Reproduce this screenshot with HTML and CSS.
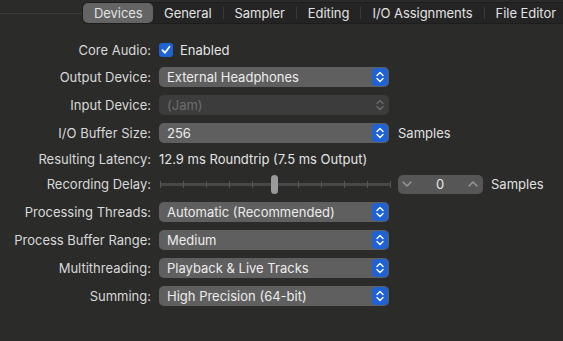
FILE: index.html
```html
<!DOCTYPE html>
<html lang="en">
<head>
    <meta charset="UTF-8">
    <meta name="viewport" content="width=device-width, initial-scale=1.0">
    <title>Audio Settings</title>
    <link rel="stylesheet" href="styles.css">
</head>
<body>
    <div class="toolbar">
        <div class="toolbar-line"></div>
        <div class="tabs">
            <div class="tab selected">Devices</div>
            <div class="tab">General</div>
            <div class="sep"></div>
            <div class="tab">Sampler</div>
            <div class="sep"></div>
            <div class="tab">Editing</div>
            <div class="sep"></div>
            <div class="tab">I/O Assignments</div>
            <div class="sep"></div>
            <div class="tab">File Editor</div>
            <div class="sep"></div>
        </div>
    </div>

    <div class="form">
        <div class="row core-row">
            <div class="label">Core Audio:</div>
            <span class="checkbox">
                <svg width="14" height="14" viewBox="0 0 14 14"><polyline points="3.5,7.2 6,9.8 10.5,3.8" fill="none" stroke="#fff" stroke-width="1.8" stroke-linecap="round" stroke-linejoin="round"/></svg>
            </span>
            <span class="value">Enabled</span>
        </div>

        <div class="row">
            <div class="label">Output Device:</div>
            <div class="popup">
                <span>External Headphones</span>
                <span class="arrows">
                    <svg width="16" height="18" viewBox="0 0 16 18"><polyline points="5,7.5 8,4.5 11,7.5" fill="none" stroke="#fff" stroke-width="1.4" stroke-linecap="round" stroke-linejoin="round"/><polyline points="5,10.5 8,13.5 11,10.5" fill="none" stroke="#fff" stroke-width="1.4" stroke-linecap="round" stroke-linejoin="round"/></svg>
                </span>
            </div>
        </div>

        <div class="row">
            <div class="label">Input Device:</div>
            <div class="popup disabled">
                <span>(Jam)</span>
                <span class="arrows">
                    <svg width="16" height="18" viewBox="0 0 16 18"><polyline points="5,7.5 8,4.5 11,7.5" fill="none" stroke="#6c6c6c" stroke-width="1.4" stroke-linecap="round" stroke-linejoin="round"/><polyline points="5,10.5 8,13.5 11,10.5" fill="none" stroke="#6c6c6c" stroke-width="1.4" stroke-linecap="round" stroke-linejoin="round"/></svg>
                </span>
            </div>
        </div>

        <div class="row">
            <div class="label">I/O Buffer Size:</div>
            <div class="popup">
                <span>256</span>
                <span class="arrows">
                    <svg width="16" height="18" viewBox="0 0 16 18"><polyline points="5,7.5 8,4.5 11,7.5" fill="none" stroke="#fff" stroke-width="1.4" stroke-linecap="round" stroke-linejoin="round"/><polyline points="5,10.5 8,13.5 11,10.5" fill="none" stroke="#fff" stroke-width="1.4" stroke-linecap="round" stroke-linejoin="round"/></svg>
                </span>
            </div>
            <span class="unit">Samples</span>
        </div>

        <div class="row latency-row">
            <div class="label">Resulting Latency:</div>
            <span class="value">12.9 ms Roundtrip (7.5 ms Output)</span>
        </div>

        <div class="row delay-row">
            <div class="label">Recording Delay:</div>
            <div class="slider">
                <div class="track"></div>
                <div class="ticks">
                    <i></i><i></i><i></i><i></i><i></i><i></i><i></i><i></i><i></i><i></i><i></i>
                </div>
                <div class="knob"></div>
            </div>
            <div class="stepper">
                <svg width="12" height="8" viewBox="0 0 12 8"><polyline points="2,2 6,6 10,2" fill="none" stroke="#9c9c9c" stroke-width="1.3" stroke-linecap="round" stroke-linejoin="round"/></svg>
                <span class="step-value">0</span>
                <svg width="12" height="8" viewBox="0 0 12 8"><polyline points="2,6 6,2 10,6" fill="none" stroke="#9c9c9c" stroke-width="1.3" stroke-linecap="round" stroke-linejoin="round"/></svg>
            </div>
            <span class="unit">Samples</span>
        </div>

        <div class="row">
            <div class="label">Processing Threads:</div>
            <div class="popup">
                <span>Automatic (Recommended)</span>
                <span class="arrows">
                    <svg width="16" height="18" viewBox="0 0 16 18"><polyline points="5,7.5 8,4.5 11,7.5" fill="none" stroke="#fff" stroke-width="1.4" stroke-linecap="round" stroke-linejoin="round"/><polyline points="5,10.5 8,13.5 11,10.5" fill="none" stroke="#fff" stroke-width="1.4" stroke-linecap="round" stroke-linejoin="round"/></svg>
                </span>
            </div>
        </div>

        <div class="row">
            <div class="label">Process Buffer Range:</div>
            <div class="popup">
                <span>Medium</span>
                <span class="arrows">
                    <svg width="16" height="18" viewBox="0 0 16 18"><polyline points="5,7.5 8,4.5 11,7.5" fill="none" stroke="#fff" stroke-width="1.4" stroke-linecap="round" stroke-linejoin="round"/><polyline points="5,10.5 8,13.5 11,10.5" fill="none" stroke="#fff" stroke-width="1.4" stroke-linecap="round" stroke-linejoin="round"/></svg>
                </span>
            </div>
        </div>

        <div class="row">
            <div class="label">Multithreading:</div>
            <div class="popup">
                <span>Playback &amp; Live Tracks</span>
                <span class="arrows">
                    <svg width="16" height="18" viewBox="0 0 16 18"><polyline points="5,7.5 8,4.5 11,7.5" fill="none" stroke="#fff" stroke-width="1.4" stroke-linecap="round" stroke-linejoin="round"/><polyline points="5,10.5 8,13.5 11,10.5" fill="none" stroke="#fff" stroke-width="1.4" stroke-linecap="round" stroke-linejoin="round"/></svg>
                </span>
            </div>
        </div>

        <div class="row">
            <div class="label">Summing:</div>
            <div class="popup">
                <span>High Precision (64-bit)</span>
                <span class="arrows">
                    <svg width="16" height="18" viewBox="0 0 16 18"><polyline points="5,7.5 8,4.5 11,7.5" fill="none" stroke="#fff" stroke-width="1.4" stroke-linecap="round" stroke-linejoin="round"/><polyline points="5,10.5 8,13.5 11,10.5" fill="none" stroke="#fff" stroke-width="1.4" stroke-linecap="round" stroke-linejoin="round"/></svg>
                </span>
            </div>
        </div>
    </div>
</body>
</html>
```

FILE: styles.css
```css
html, body {
    margin: 0;
    height: 100%;
    overflow: hidden;
}
body {
    background-color: #2b2b2a;
    font-family: Inter, "Liberation Sans", sans-serif;
    font-size: 13px;
    color: #dcdcdc;
}

.toolbar {
    display: flex;
    align-items: center;
    height: 22px;
    margin-top: 2px;
    white-space: nowrap;
}
.toolbar-line {
    width: 82px;
    flex-shrink: 0;
    height: 1px;
    background-color: #3c3c3c;
}
.tabs {
    display: flex;
    align-items: center;
    flex: 1;
    height: 22px;
    box-sizing: border-box;
    background-color: #242424;
    border: 1px solid #1d1d1d;
    border-right: none;
    border-radius: 6px 0 0 6px;
}
.tab {
    padding: 0 11px;
    height: 20px;
    line-height: 20px;
    color: #e2e2e2;
    letter-spacing: -0.05px;
}
.tab.selected {
    background-color: #646464;
    border-radius: 5px;
    width: 48px;
    text-align: center;
}
.sep {
    width: 1px;
    height: 12px;
    background-color: #3a3a3a;
}

.form {
    display: flex;
    flex-direction: column;
    gap: 8px;
    padding-top: 16px;
}
.row {
    display: flex;
    align-items: center;
    height: 20px;
}
.core-row {
    margin-bottom: -1px;
}
.latency-row {
    height: 16px;
}
.delay-row {
    margin-top: -1px;
}
.label {
    width: 151px;
    text-align: right;
    margin-right: 8px;
    flex-shrink: 0;
    color: #d9d9d9;
}
.value {
    color: #e4e4e4;
}
.checkbox {
    width: 14px;
    height: 14px;
    border-radius: 3px;
    background-color: #1f62d4;
    display: inline-flex;
    margin-right: 7px;
}
.unit {
    margin-left: 9px;
    color: #e0e0e0;
}

.popup {
    display: flex;
    align-items: center;
    justify-content: space-between;
    width: 230px;
    height: 20px;
    box-sizing: border-box;
    padding: 1px 1px 1px 8px;
    background-color: #5f5f5f;
    border-radius: 5px;
    color: #ececec;
}
.arrows {
    display: flex;
    width: 16px;
    height: 18px;
    border-radius: 4px;
    background-color: #1f62d4;
}
.popup.disabled {
    background-color: #3c3c3c;
    color: #6d6d6d;
}
.popup.disabled .arrows {
    background-color: transparent;
}

.slider {
    position: relative;
    width: 231px;
    height: 20px;
    margin-left: 1px;
}
.track {
    position: absolute;
    left: 0;
    right: 0;
    top: 9px;
    height: 3px;
    background-color: #484848;
}
.ticks {
    position: absolute;
    left: 0;
    right: 0;
    top: 7px;
    display: flex;
    justify-content: space-between;
}
.ticks i {
    width: 1px;
    height: 7px;
    background-color: #555;
}
.knob {
    position: absolute;
    left: 111px;
    top: 1px;
    width: 7px;
    height: 19px;
    border-radius: 4px;
    background-color: #9a9a9a;
}
.stepper {
    display: flex;
    align-items: center;
    justify-content: space-between;
    width: 85px;
    height: 19px;
    box-sizing: border-box;
    padding: 0 4px 0 3px;
    margin-left: 7px;
    background-color: #565656;
    border-radius: 5px;
}
.step-value {
    color: #e6e6e6;
}
.delay-row .unit {
    margin-left: 8px;
}
```
